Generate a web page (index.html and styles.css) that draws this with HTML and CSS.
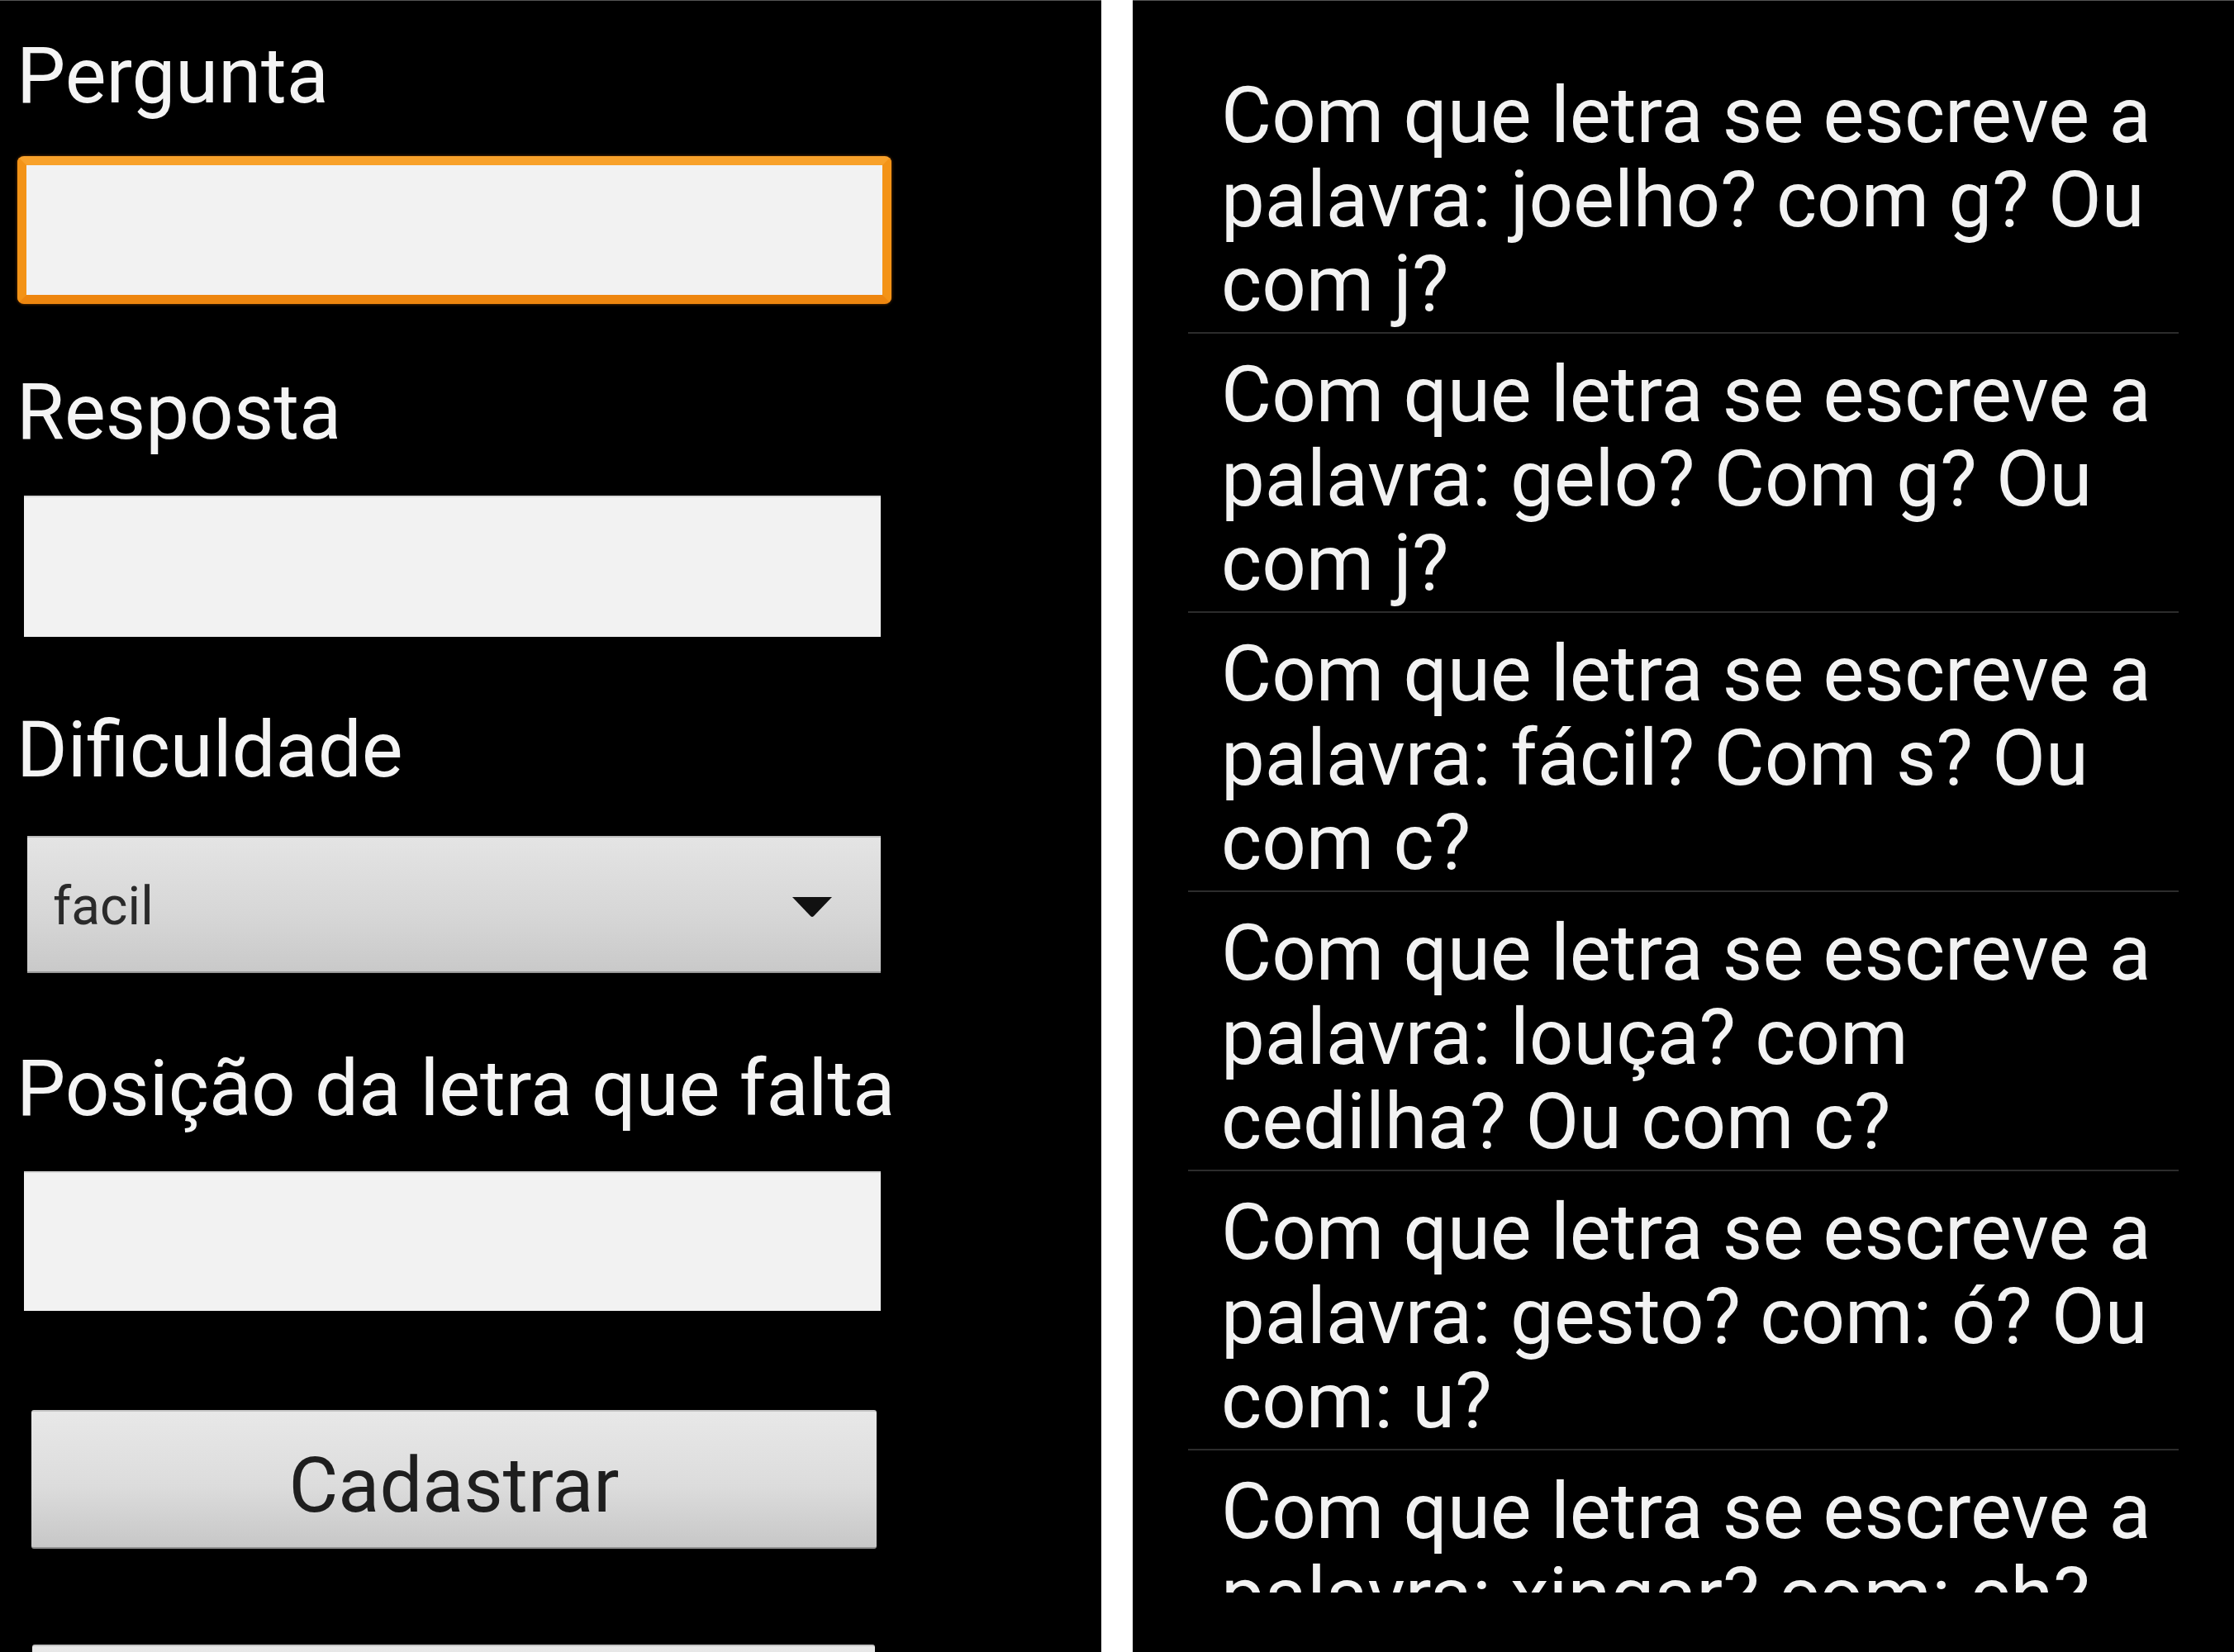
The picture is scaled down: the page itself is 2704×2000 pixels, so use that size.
FILE: index.html
```html
<!DOCTYPE html>
<html lang="pt">
<head>
<meta charset="utf-8">
<title>Cadastro de perguntas</title>
<link rel="stylesheet" href="styles.css">
</head>
<body>
<main class="screen form-screen">
  <label class="field-label label-pergunta" for="pergunta">Pergunta</label>
  <input class="text-field focused" id="pergunta" type="text">
  <label class="field-label label-resposta" for="resposta">Resposta</label>
  <input class="text-field field-resposta" id="resposta" type="text">
  <span class="field-label label-dificuldade">Dificuldade</span>
  <div class="spinner">
    <span class="spinner-value">facil</span>
    <svg class="spinner-arrow" width="50" height="26" viewBox="0 0 50 26"><path d="M1 1 H49 L27 24 Q25 26 23 24 Z" fill="#111"/></svg>
  </div>
  <label class="field-label label-posicao" for="posicao">Posição da letra que falta</label>
  <input class="text-field field-posicao" id="posicao" type="text">
  <button class="btn btn-cadastrar" type="button">Cadastrar</button>
  <button class="btn btn-next" type="button" aria-label="Listar"></button>
</main>
<section class="screen list-screen">
  <ul class="question-list">
    <li class="question">Com que letra se escreve a palavra: joelho? com g? Ou com j?</li>
    <li class="question">Com que letra se escreve a palavra: gelo? Com g? Ou com j?</li>
    <li class="question">Com que letra se escreve a palavra: fácil? Com s? Ou com c?</li>
    <li class="question">Com que letra se escreve a palavra: louça? com cedilha? Ou com c?</li>
    <li class="question">Com que letra se escreve a palavra: gesto? com: ó? Ou com: u?</li>
    <li class="question">Com que letra se escreve a palavra: xingar? com: ch? Ou com: x?</li>
  </ul>
</section>
</body>
</html>
```

FILE: styles.css
```css
html, body {
  margin: 0;
  padding: 0;
}
body {
  background: #ffffff;
  display: flex;
  gap: 38px;
  width: 2704px;
  height: 2000px;
  overflow: hidden;
  font-family: Roboto, "Liberation Sans", sans-serif;
}
.screen {
  width: 1333px;
  height: 2000px;
  flex: none;
  background: #000;
  border-top: 1px solid #555;
  box-sizing: border-box;
  overflow: hidden;
}
.form-screen {
  display: flex;
  flex-direction: column;
  align-items: flex-start;
}
.form-screen > * {
  flex: none;
}
.field-label {
  display: block;
  color: #f4f4f4;
  font-size: 94px;
  line-height: 110px;
  height: 110px;
  margin-left: 20px;
  white-space: nowrap;
}
.label-pergunta { margin-top: 36px; }
.label-resposta { margin-top: 76px; }
.label-dificuldade { margin-top: 82px; }
.label-posicao { margin-top: 85px; }

.text-field {
  display: block;
  box-sizing: border-box;
  margin: 46px 0 0 29px;
  width: 1037px;
  height: 171px;
  padding: 0;
  border: none;
  border-top: 2px solid #d8d8d8;
  background: #f2f2f2;
  outline: none;
  font: inherit;
}
.text-field.focused {
  margin: 42px 0 0 21px;
  width: 1058px;
  height: 179px;
  border: 11px solid #f39317;
  border-top-color: #f8a12a;
  border-bottom-color: #ee860f;
  border-radius: 8px;
  box-shadow: 0 0 3px 1px rgba(120, 60, 0, 0.6);
}
.field-posicao {
  margin-top: 45px;
  height: 169px;
}

.spinner {
  box-sizing: border-box;
  margin: 49px 0 0 33px;
  width: 1033px;
  height: 166px;
  background: linear-gradient(#e4e4e4, #d6d6d6 60%, #c9c9c9);
  border-top: 2px solid #bdbdbd;
  border-bottom: 2px solid #9a9a9a;
  display: flex;
  align-items: center;
  justify-content: space-between;
  padding: 0 58px 0 31px;
}
.spinner-value {
  color: #2a2a2a;
  font-size: 64px;
  line-height: 80px;
  margin-top: 6px;
}
.spinner-arrow {
  display: block;
  margin-top: 6px;
}

.btn {
  display: flex;
  align-items: center;
  justify-content: center;
  box-sizing: border-box;
  border: none;
  border-top: 2px solid #c4c4c4;
  border-bottom: 2px solid #8f8f8f;
  border-radius: 3px;
  background: linear-gradient(#e8e8e8, #dcdcdc 55%, #c7c7c7);
  color: #1e1e1e;
  font-family: Roboto, "Liberation Sans", sans-serif;
  font-size: 92px;
  line-height: 110px;
  padding: 16px 0 0;
  height: 168px;
}
.btn-cadastrar {
  margin: 120px 0 0 38px;
  width: 1023px;
}
.btn-next {
  margin: 116px 0 0 39px;
  width: 1020px;
}

.question-list {
  list-style: none;
  margin: 65px 67px 0;
  padding: 0;
  height: 1862px;
  overflow: hidden;
}
.question {
  color: #f2f2f2;
  font-size: 94px;
  line-height: 102px;
  padding: 23px 0 7px 40px;
  border-bottom: 2px solid #2c2c2c;
}
```
